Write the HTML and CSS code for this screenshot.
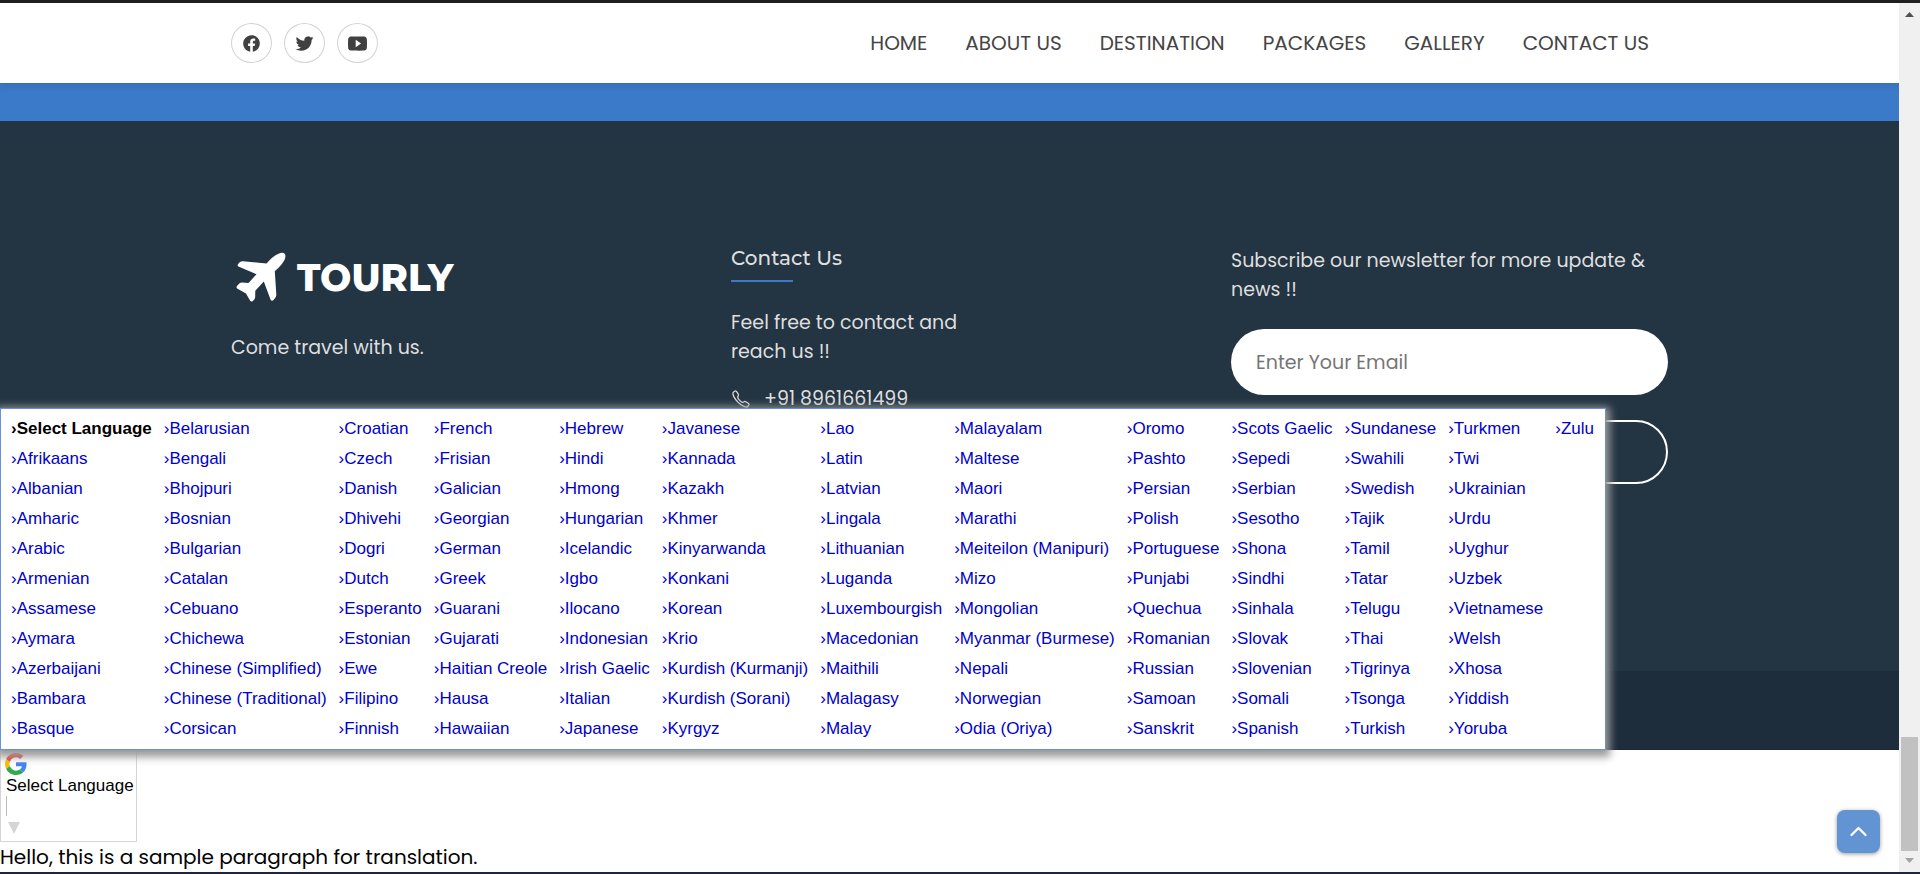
FILE: index.html
```
<!DOCTYPE html>
<html lang="en">
<head>
<meta charset="utf-8">
<title>Tourly</title>
<link rel="stylesheet" href="styles.css">
</head>
<body>
<div class="window">
  <div class="page">
    <header class="header">
      <div class="container header-row">
        <ul class="social-list">
          <li><a href="#" class="social-link" aria-label="Facebook"><svg viewBox="0 0 512 512" class="icon"><path d="M480 257.35c0-123.7-100.3-224-224-224s-224 100.3-224 224c0 111.8 81.9 204.47 189 221.29V322.12h-56.89v-64.77H221V208c0-56.13 33.45-87.16 84.61-87.16 24.51 0 50.15 4.38 50.15 4.38v55.13H327.5c-27.81 0-36.51 17.26-36.51 35v42h62.12l-9.92 64.77H291v156.54c107.1-16.81 189-109.48 189-221.31z"/></svg></a></li>
          <li><a href="#" class="social-link" aria-label="Twitter"><svg viewBox="0 0 512 512" class="icon"><path d="M496 109.5a201.8 201.8 0 01-56.55 15.3 97.51 97.51 0 0043.33-53.6 197.74 197.74 0 01-62.56 23.5A99.14 99.14 0 00348.31 64c-54.42 0-98.46 43.4-98.46 96.9a93.21 93.21 0 002.54 22.1 280.7 280.7 0 01-203-101.3A95.69 95.69 0 0036 130.4c0 33.6 17.53 63.3 44 80.7A97.5 97.5 0 0135.22 199v1.2c0 47 34 86.1 79 95a100.76 100.76 0 01-25.94 3.4 94.38 94.38 0 01-18.51-1.8c12.51 38.5 48.92 66.5 92.05 67.3A199.59 199.59 0 0139.5 405.6a203 203 0 01-23.5-1.4A278.68 278.68 0 00166.74 448c181.36 0 280.44-147.7 280.44-275.8 0-4.2-.11-8.4-.31-12.5A198.48 198.48 0 00496 109.5z"/></svg></a></li>
          <li><a href="#" class="social-link" aria-label="YouTube"><svg viewBox="0 0 512 512" class="icon"><path d="M508.64 148.79c0-45-33.1-81.2-74-81.2C379.24 65 322.74 64 265 64h-18c-57.6 0-114.2 1-169.6 3.6C36.6 67.6 3.5 104 3.5 149 1 184.59-.06 220.19 0 255.79q-.15 53.4 3.4 106.9c0 45 33.1 81.5 73.9 81.5 58.2 2.7 117.9 3.9 178.6 3.8q91.2.3 178.6-3.8c40.9 0 74-36.5 74-81.5 2.4-35.7 3.5-71.3 3.4-107q.34-53.4-3.26-106.9zM207 353.89v-196.5l145 98.2z"/></svg></a></li>
        </ul>
        <nav class="nav">
          <a href="#">HOME</a>
          <a href="#">ABOUT US</a>
          <a href="#">DESTINATION</a>
          <a href="#">PACKAGES</a>
          <a href="#">GALLERY</a>
          <a href="#">CONTACT US</a>
        </nav>
      </div>
    </header>
    <div class="cta-band"></div>
    <footer class="footer">
      <div class="footer-top">
        <div class="container footer-grid">
          <section>
            <a href="#" class="logo">
              <svg class="logo-plane" viewBox="0 0 50 50"><path d="M30.500 11.500C35 6 42 .5 46.500.7C49 1 49.700 2.500 49.300 5.500C48.500 10 43 15.500 38.800 19.200L40.300 42.500C40.500 44 39.500 45.500 37.500 48C36.500 49 35.200 49 34.500 47.500L27.800 29.500L19.300 38.700L19.200 45C19.200 46.500 18 48 16.500 49.200C15.500 50 14.500 49.500 14 48.500L10 41.500L1.500 36.700C.3 36 .2 35 1 34C2.500 32 4 30.500 6 30.400L12.500 31L20.500 22.300L3 14.800C1.700 14.200 1.200 13.200 2 12.200C3.500 10.200 5 9 7 9.300Z"/></svg>
              <span class="logo-name">TOURLY</span>
            </a>
            <p>Come travel with us.</p>
          </section>
          <section>
            <h2 class="contact-title">Contact Us</h2>
            <p class="contact-text">Feel free to contact and reach us !!</p>
            <a href="#" class="contact-link">
              <svg class="icon-call" viewBox="0 0 512 512"><path d="M451 374c-15.88-16-54.34-39.35-73-48.76-24.3-12.24-26.3-13.24-45.4.95-12.74 9.47-21.21 17.93-36.12 14.75s-47.31-21.11-75.68-49.39-47.34-61.62-50.53-76.48 5.41-23.23 14.79-36c13.22-18 12.22-21 .92-45.3-8.81-18.9-32.84-57-48.9-72.8C119.9 44 119.9 47 108.83 51.6A160.15 160.15 0 0083 65.37C67 76 58.12 84.83 51.91 98.1s-9 44.38 23.07 102.64 54.57 88.05 101.14 134.49S258.5 406.64 310.85 436c64.76 36.27 89.6 29.2 102.91 23s22.18-15 32.83-31a159.09 159.09 0 0013.8-25.8C465 391.17 468 391.17 451 374z"/></svg>
              <span>+91 8961661499</span>
            </a>
          </section>
          <section>
            <p>Subscribe our newsletter for more update &amp; news !!</p>
            <form class="subscribe">
              <input type="email" class="email" placeholder="Enter Your Email" aria-label="Enter Your Email">
              <button type="button" class="subscribe-button" aria-label="Subscribe"></button>
            </form>
          </section>
        </div>
      </div>
      <div class="footer-bottom"></div>
      <div class="language-menu">
        <ul>
          <li class="current"><a href="#">›Select Language</a></li><li><a href="#">›Afrikaans</a></li><li><a href="#">›Albanian</a></li><li><a href="#">›Amharic</a></li><li><a href="#">›Arabic</a></li><li><a href="#">›Armenian</a></li><li><a href="#">›Assamese</a></li><li><a href="#">›Aymara</a></li><li><a href="#">›Azerbaijani</a></li><li><a href="#">›Bambara</a></li><li><a href="#">›Basque</a></li>
        </ul>
        <ul>
          <li><a href="#">›Belarusian</a></li><li><a href="#">›Bengali</a></li><li><a href="#">›Bhojpuri</a></li><li><a href="#">›Bosnian</a></li><li><a href="#">›Bulgarian</a></li><li><a href="#">›Catalan</a></li><li><a href="#">›Cebuano</a></li><li><a href="#">›Chichewa</a></li><li><a href="#">›Chinese (Simplified)</a></li><li><a href="#">›Chinese (Traditional)</a></li><li><a href="#">›Corsican</a></li>
        </ul>
        <ul>
          <li><a href="#">›Croatian</a></li><li><a href="#">›Czech</a></li><li><a href="#">›Danish</a></li><li><a href="#">›Dhivehi</a></li><li><a href="#">›Dogri</a></li><li><a href="#">›Dutch</a></li><li><a href="#">›Esperanto</a></li><li><a href="#">›Estonian</a></li><li><a href="#">›Ewe</a></li><li><a href="#">›Filipino</a></li><li><a href="#">›Finnish</a></li>
        </ul>
        <ul>
          <li><a href="#">›French</a></li><li><a href="#">›Frisian</a></li><li><a href="#">›Galician</a></li><li><a href="#">›Georgian</a></li><li><a href="#">›German</a></li><li><a href="#">›Greek</a></li><li><a href="#">›Guarani</a></li><li><a href="#">›Gujarati</a></li><li><a href="#">›Haitian Creole</a></li><li><a href="#">›Hausa</a></li><li><a href="#">›Hawaiian</a></li>
        </ul>
        <ul>
          <li><a href="#">›Hebrew</a></li><li><a href="#">›Hindi</a></li><li><a href="#">›Hmong</a></li><li><a href="#">›Hungarian</a></li><li><a href="#">›Icelandic</a></li><li><a href="#">›Igbo</a></li><li><a href="#">›Ilocano</a></li><li><a href="#">›Indonesian</a></li><li><a href="#">›Irish Gaelic</a></li><li><a href="#">›Italian</a></li><li><a href="#">›Japanese</a></li>
        </ul>
        <ul>
          <li><a href="#">›Javanese</a></li><li><a href="#">›Kannada</a></li><li><a href="#">›Kazakh</a></li><li><a href="#">›Khmer</a></li><li><a href="#">›Kinyarwanda</a></li><li><a href="#">›Konkani</a></li><li><a href="#">›Korean</a></li><li><a href="#">›Krio</a></li><li><a href="#">›Kurdish (Kurmanji)</a></li><li><a href="#">›Kurdish (Sorani)</a></li><li><a href="#">›Kyrgyz</a></li>
        </ul>
        <ul>
          <li><a href="#">›Lao</a></li><li><a href="#">›Latin</a></li><li><a href="#">›Latvian</a></li><li><a href="#">›Lingala</a></li><li><a href="#">›Lithuanian</a></li><li><a href="#">›Luganda</a></li><li><a href="#">›Luxembourgish</a></li><li><a href="#">›Macedonian</a></li><li><a href="#">›Maithili</a></li><li><a href="#">›Malagasy</a></li><li><a href="#">›Malay</a></li>
        </ul>
        <ul>
          <li><a href="#">›Malayalam</a></li><li><a href="#">›Maltese</a></li><li><a href="#">›Maori</a></li><li><a href="#">›Marathi</a></li><li><a href="#">›Meiteilon (Manipuri)</a></li><li><a href="#">›Mizo</a></li><li><a href="#">›Mongolian</a></li><li><a href="#">›Myanmar (Burmese)</a></li><li><a href="#">›Nepali</a></li><li><a href="#">›Norwegian</a></li><li><a href="#">›Odia (Oriya)</a></li>
        </ul>
        <ul>
          <li><a href="#">›Oromo</a></li><li><a href="#">›Pashto</a></li><li><a href="#">›Persian</a></li><li><a href="#">›Polish</a></li><li><a href="#">›Portuguese</a></li><li><a href="#">›Punjabi</a></li><li><a href="#">›Quechua</a></li><li><a href="#">›Romanian</a></li><li><a href="#">›Russian</a></li><li><a href="#">›Samoan</a></li><li><a href="#">›Sanskrit</a></li>
        </ul>
        <ul>
          <li><a href="#">›Scots Gaelic</a></li><li><a href="#">›Sepedi</a></li><li><a href="#">›Serbian</a></li><li><a href="#">›Sesotho</a></li><li><a href="#">›Shona</a></li><li><a href="#">›Sindhi</a></li><li><a href="#">›Sinhala</a></li><li><a href="#">›Slovak</a></li><li><a href="#">›Slovenian</a></li><li><a href="#">›Somali</a></li><li><a href="#">›Spanish</a></li>
        </ul>
        <ul>
          <li><a href="#">›Sundanese</a></li><li><a href="#">›Swahili</a></li><li><a href="#">›Swedish</a></li><li><a href="#">›Tajik</a></li><li><a href="#">›Tamil</a></li><li><a href="#">›Tatar</a></li><li><a href="#">›Telugu</a></li><li><a href="#">›Thai</a></li><li><a href="#">›Tigrinya</a></li><li><a href="#">›Tsonga</a></li><li><a href="#">›Turkish</a></li>
        </ul>
        <ul>
          <li><a href="#">›Turkmen</a></li><li><a href="#">›Twi</a></li><li><a href="#">›Ukrainian</a></li><li><a href="#">›Urdu</a></li><li><a href="#">›Uyghur</a></li><li><a href="#">›Uzbek</a></li><li><a href="#">›Vietnamese</a></li><li><a href="#">›Welsh</a></li><li><a href="#">›Xhosa</a></li><li><a href="#">›Yiddish</a></li><li><a href="#">›Yoruba</a></li>
        </ul>
        <ul>
          <li><a href="#">›Zulu</a></li>
        </ul>
      </div>
    </footer>
    <div class="translate">
      <svg class="google" viewBox="0 0 48 48"><path fill="#ea4335" d="M24 9.500c3.540 0 6.710 1.220 9.210 3.600l6.850-6.850C35.900 2.380 30.470 0 24 0 14.620 0 6.510 5.380 2.560 13.220l7.980 6.190C12.430 13.720 17.740 9.500 24 9.500z"/><path fill="#4285f4" d="M46.980 24.550c0-1.570-.15-3.090-.38-4.550H24v9.020h12.940c-.58 2.960-2.260 5.480-4.780 7.180l7.730 6c4.510-4.180 7.090-10.360 7.090-17.650z"/><path fill="#fbbc05" d="M10.530 28.590c-.48-1.450-.76-2.990-.76-4.590s.27-3.140.76-4.590l-7.980-6.190C.92 16.460 0 20.120 0 24c0 3.880.92 7.540 2.560 10.780l7.970-6.190z"/><path fill="#34a853" d="M24 48c6.480 0 11.930-2.130 15.890-5.810l-7.730-6c-2.150 1.450-4.920 2.300-8.160 2.300-6.260 0-11.570-4.220-13.470-9.910l-7.980 6.190C6.510 42.620 14.620 48 24 48z"/></svg>
      <a href="#" class="translate-link">
        <span>Select Language</span>
        <span class="translate-divider"></span>
        <svg class="translate-arrow" viewBox="0 0 12 12"><path d="M0 0h12L6 12z"/></svg>
      </a>
    </div>
    <p class="sample">Hello, this is a sample paragraph for translation.</p>
    <a href="#" class="go-top" aria-label="Go to top"><svg viewBox="0 0 512 512"><path d="M112 328l144-144 144 144"/></svg></a>
  </div>
  <div class="scrollbar">
    <svg class="scroll-up" viewBox="0 0 9 5"><path d="M0 5L4.500 0 9 5z"/></svg>
    <div class="scroll-thumb"></div>
    <svg class="scroll-down" viewBox="0 0 9 5"><path d="M0 0h9L4.500 5z"/></svg>
  </div>
</div>
</body>
</html>
```
FILE: styles.css
```
* { box-sizing: border-box; margin: 0; padding: 0; }
ul { list-style: none; }
a { color: inherit; text-decoration: none; }
svg { display: block; flex-shrink: 0; }

body { font-family: Poppins, Inter, sans-serif; background: #fff; }

.window {
  display: flex;
  height: 100vh;
  overflow: hidden;
  border-top: 3px solid #201f1f;
  border-bottom: 2px solid #1f2540;
}
.page { position: relative; flex: 1; min-width: 0; overflow: hidden; }
.container { width: calc(100% - 462px); margin: 0 auto; }

.header { position: relative; z-index: 1; background: #fff; box-shadow: 0 2px 8px rgba(0, 0, 0, .1); }
.header-row { display: flex; justify-content: space-between; align-items: center; height: 80px; }
.social-list { display: flex; gap: 12px; }
.social-link {
  display: flex; align-items: center; justify-content: center;
  width: 41px; height: 40px;
  border: 1px solid #d3d3d3; border-radius: 50%;
}
.icon { width: 19px; height: 19px; fill: #404040; }
.nav { display: flex; gap: 38px; padding-right: 19px; font-size: 20px; color: #454545; }

.cta-band { height: 38px; background: #3b79c9; }

.footer { position: relative; background: #233443; color: #dfdfdf; font-size: 19px; line-height: 29px; }
.footer-top { padding: 125px 0 187px; }
.footer-grid { display: grid; grid-template-columns: repeat(3, 1fr); gap: 63px; height: 238px; }
.footer-bottom { height: 79px; background: #1e2d3b; border-bottom: 1px solid #20263a; }

.logo { display: flex; align-items: center; gap: 11px; height: 62px; padding-left: 5px; margin-bottom: 25px; color: #fff; }
.logo-plane { width: 50px; height: 50px; fill: #fff; }
.logo-name { font-family: Montserrat, Inter, sans-serif; font-size: 37px; font-weight: 800; }

.contact-title {
  position: relative;
  padding-bottom: 11px; margin-bottom: 26px;
  font-family: Montserrat, Inter, sans-serif; font-size: 20px; font-weight: 500; line-height: 25px;
}
.contact-title::after { content: ""; position: absolute; left: 0; bottom: 0; width: 62px; height: 2px; background: #3b79c9; }
.contact-text { max-width: 250px; margin-bottom: 18px; }
.contact-link { display: flex; align-items: center; gap: 13px; }
.icon-call { width: 20px; height: 20px; fill: none; stroke: #dfdfdf; stroke-width: 32; }

.subscribe { display: flex; flex-direction: column; gap: 25px; margin-top: 25px; }
.email { height: 66px; padding: 0 25px; border: 0; border-radius: 33px; background: #fff; font: inherit; }
.email::placeholder { color: #757575; }
.subscribe-button { height: 64px; border: 2px solid #fff; border-radius: 32px; background: transparent; }

.language-menu {
  position: absolute; left: 0; bottom: 0; z-index: 2;
  display: flex; gap: 12px;
  padding: 5px 11px 5px 10px;
  border: 1px solid #6b90da;
  background: #fff;
  box-shadow: 0 3px 8px 4px #999;
  font: 17px/30px "Liberation Sans", Arial, sans-serif;
  color: #00c;
  white-space: nowrap;
}
.current { font-weight: 700; color: #000; }

.translate {
  display: flex; flex-direction: column; gap: 1px;
  width: 137px; height: 92px; padding: 2px 4px;
  border: 1px solid #d5d5d5;
  font: 17px/20px "Liberation Sans", Arial, sans-serif;
}
.google { width: 22px; height: 22px; }
.translate-link { display: flex; flex-direction: column; padding-left: 1px; white-space: nowrap; color: #000; }
.translate-divider { height: 20px; border-left: 1px solid #bbb; }
.translate-arrow { width: 12px; height: 12px; margin: 6px 2px 0; fill: #d5d5d5; }
.sample { font-size: 20px; line-height: 30px; color: #000; }

.go-top {
  position: absolute; right: 19px; bottom: 19px;
  display: flex; align-items: center; justify-content: center;
  width: 43px; height: 43px; border-radius: 8px;
  background: #6293d3; box-shadow: 0 1px 4px rgba(0, 0, 0, .4);
}
.go-top svg { width: 25px; height: 25px; fill: none; stroke: #fff; stroke-width: 48; stroke-linecap: round; stroke-linejoin: round; }

.scrollbar { display: flex; flex-direction: column; align-items: center; width: 21px; padding: 9px 0; background: #f0f0f0; }
.scroll-up, .scroll-down { width: 9px; height: 5px; }
.scroll-up { fill: #505050; }
.scroll-down { fill: #a3a3a3; }
.scroll-thumb { width: 17px; height: 114px; margin: auto 0 7px; background: #c1c1c1; }
```
